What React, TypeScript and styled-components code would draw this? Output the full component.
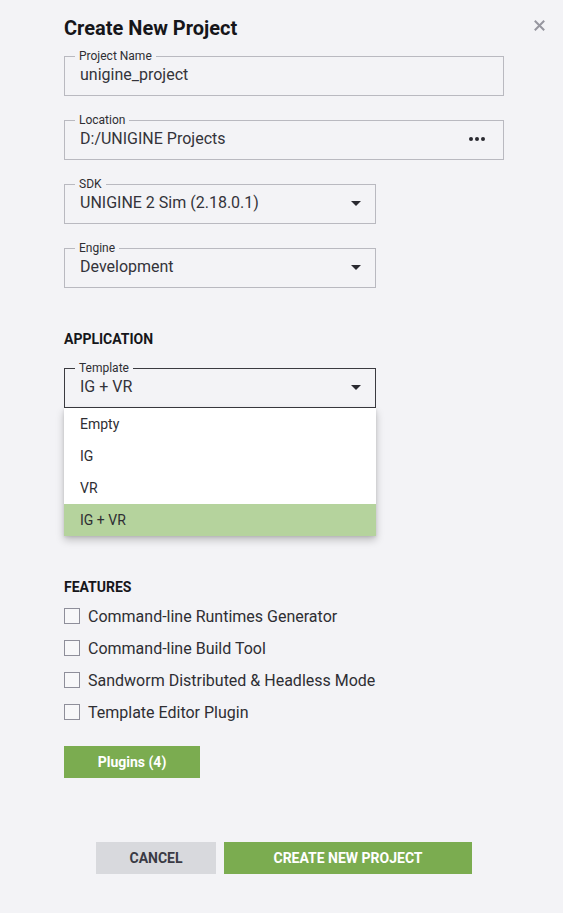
import React from "react";
import styled, { createGlobalStyle } from "styled-components";

const Global = createGlobalStyle`
  html, body { margin: 0; padding: 0; background: #f3f3f6; }
  body { font-family: Roboto, "Noto Sans", Arial, sans-serif; color: #2b2b30; }
  * { box-sizing: border-box; }
`;

const Dialog = styled.div`
  width: 563px;
  min-height: 913px;
  background: #f3f3f6;
  padding: 16px 18px 0 64px;
`;

const Header = styled.div`
  display: flex;
  justify-content: space-between;
  align-items: flex-start;
`;

const Title = styled.h1`
  margin: 0;
  font-size: 20px;
  line-height: 24px;
  font-weight: 700;
  color: #16161a;
`;

const CloseButton = styled.button`
  border: 0;
  background: none;
  padding: 0;
  margin-top: 4px;
  width: 11px;
  height: 11px;
  display: flex;
  cursor: pointer;
`;

const Body = styled.div`
  width: 440px;
  display: flex;
  flex-direction: column;
`;

const Field = styled.fieldset<{ $w?: number; $dark?: boolean; $mt: number }>`
  position: relative;
  margin: ${(p) => p.$mt}px 0 0 0;
  width: ${(p) => p.$w ?? 440}px;
  border: 1px solid ${(p) => (p.$dark ? "#3a3a40" : "#b9b9c0")};
  padding: 0 15px 8px 15px;
  min-width: 0;
`;

const Legend = styled.legend`
  margin-left: -5px;
  padding: 0 4px;
  font-size: 12px;
  line-height: 14px;
  color: #2e2e33;
`;

const ValueRow = styled.div`
  display: flex;
  align-items: center;
  justify-content: space-between;
  height: 24px;
`;

const Value = styled.span`
  font-size: 16px;
  line-height: 24px;
  color: #33333a;
`;

const IconSlot = styled.span<{ $mr: number }>`
  display: flex;
  align-items: center;
  margin-right: ${(p) => p.$mr}px;
`;

const SectionTitle = styled.h2<{ $mt: number }>`
  margin: ${(p) => p.$mt}px 0 0 0;
  font-size: 14px;
  line-height: 20px;
  font-weight: 700;
  color: #16161a;
`;

const Menu = styled.ul`
  position: absolute;
  left: -1px;
  top: 100%;
  margin: 0;
  margin-top: 1px;
  padding: 0;
  list-style: none;
  width: 312px;
  background: #ffffff;
  box-shadow: 0 4px 8px rgba(0, 0, 0, 0.22), 0 1px 3px rgba(0, 0, 0, 0.1);
  z-index: 2;
`;

const MenuItem = styled.li<{ $active?: boolean }>`
  height: 32px;
  display: flex;
  align-items: center;
  padding-left: 16px;
  font-size: 14px;
  color: #2e2e33;
  background: ${(p) => (p.$active ? "#b5d39d" : "transparent")};
`;

const CheckList = styled.div`
  margin-top: 3px;
  display: flex;
  flex-direction: column;
`;

const CheckRow = styled.label`
  height: 32px;
  display: flex;
  align-items: center;
  gap: 8px;
  font-size: 16px;
  color: #2e2e33;
`;

const Box = styled.span`
  width: 16px;
  height: 16px;
  border: 1.5px solid #8e8e9a;
  background: #f7f7f9;
  flex-shrink: 0;
`;

const Button = styled.button<{ $variant: "green" | "gray"; $w: number }>`
  width: ${(p) => p.$w}px;
  height: 32px;
  border: 0;
  font-family: Roboto, Arial, sans-serif;
  font-size: 14px;
  font-weight: 700;
  color: ${(p) => (p.$variant === "green" ? "#ffffff" : "#3a3a44")};
  background: ${(p) => (p.$variant === "green" ? "#7bac50" : "#d8d9dd")};
  cursor: pointer;
  padding: 0;
`;

const PluginsWrap = styled.div`
  margin-top: 18px;
`;

const Footer = styled.div`
  margin-top: 64px;
  display: flex;
  justify-content: center;
  gap: 8px;
`;

const Caret = () => (
  <svg width="10" height="5" viewBox="0 0 10 5">
    <polygon points="0,0 10,0 5,5" fill="#2a2a30" />
  </svg>
);

const Dots = () => (
  <svg width="16" height="4" viewBox="0 0 16 4">
    <circle cx="2" cy="2" r="2" fill="#2a2a30" />
    <circle cx="8" cy="2" r="2" fill="#2a2a30" />
    <circle cx="14" cy="2" r="2" fill="#2a2a30" />
  </svg>
);

const CloseIcon = () => (
  <svg width="11" height="11" viewBox="0 0 11 11">
    <path d="M0.8 0.8 L10.2 10.2 M10.2 0.8 L0.8 10.2" stroke="#96969f" strokeWidth="2" />
  </svg>
);

const features = [
  "Command-line Runtimes Generator",
  "Command-line Build Tool",
  "Sandworm Distributed & Headless Mode",
  "Template Editor Plugin",
];

const templates = ["Empty", "IG", "VR", "IG + VR"];

export default function App() {
  return (
    <>
      <Global />
      <Dialog>
        <Header>
          <Title>Create New Project</Title>
          <CloseButton aria-label="Close">
            <CloseIcon />
          </CloseButton>
        </Header>
        <Body>
          <Field $mt={9}>
            <Legend>Project Name</Legend>
            <ValueRow>
              <Value>unigine_project</Value>
            </ValueRow>
          </Field>
          <Field $mt={17}>
            <Legend>Location</Legend>
            <ValueRow>
              <Value>D:/UNIGINE Projects</Value>
              <IconSlot $mr={3}>
                <Dots />
              </IconSlot>
            </ValueRow>
          </Field>
          <Field $mt={17} $w={312}>
            <Legend>SDK</Legend>
            <ValueRow>
              <Value>UNIGINE 2 Sim (2.18.0.1)</Value>
              <IconSlot $mr={-1}>
                <Caret />
              </IconSlot>
            </ValueRow>
          </Field>
          <Field $mt={17} $w={312}>
            <Legend>Engine</Legend>
            <ValueRow>
              <Value>Development</Value>
              <IconSlot $mr={-1}>
                <Caret />
              </IconSlot>
            </ValueRow>
          </Field>

          <SectionTitle $mt={41}>APPLICATION</SectionTitle>
          <Field $mt={12} $w={312} $dark>
            <Legend>Template</Legend>
            <ValueRow>
              <Value>IG + VR</Value>
              <IconSlot $mr={-1}>
                <Caret />
              </IconSlot>
            </ValueRow>
            <Menu>
              {templates.map((t) => (
                <MenuItem key={t} $active={t === "IG + VR"}>
                  {t}
                </MenuItem>
              ))}
            </Menu>
          </Field>

          <SectionTitle $mt={169}>FEATURES</SectionTitle>
          <CheckList>
            {features.map((f) => (
              <CheckRow key={f}>
                <Box />
                {f}
              </CheckRow>
            ))}
          </CheckList>
          <PluginsWrap>
            <Button $variant="green" $w={136}>Plugins (4)</Button>
          </PluginsWrap>
          <Footer>
            <Button $variant="gray" $w={120}>CANCEL</Button>
            <Button $variant="green" $w={248}>CREATE NEW PROJECT</Button>
          </Footer>
        </Body>
      </Dialog>
    </>
  );
}
